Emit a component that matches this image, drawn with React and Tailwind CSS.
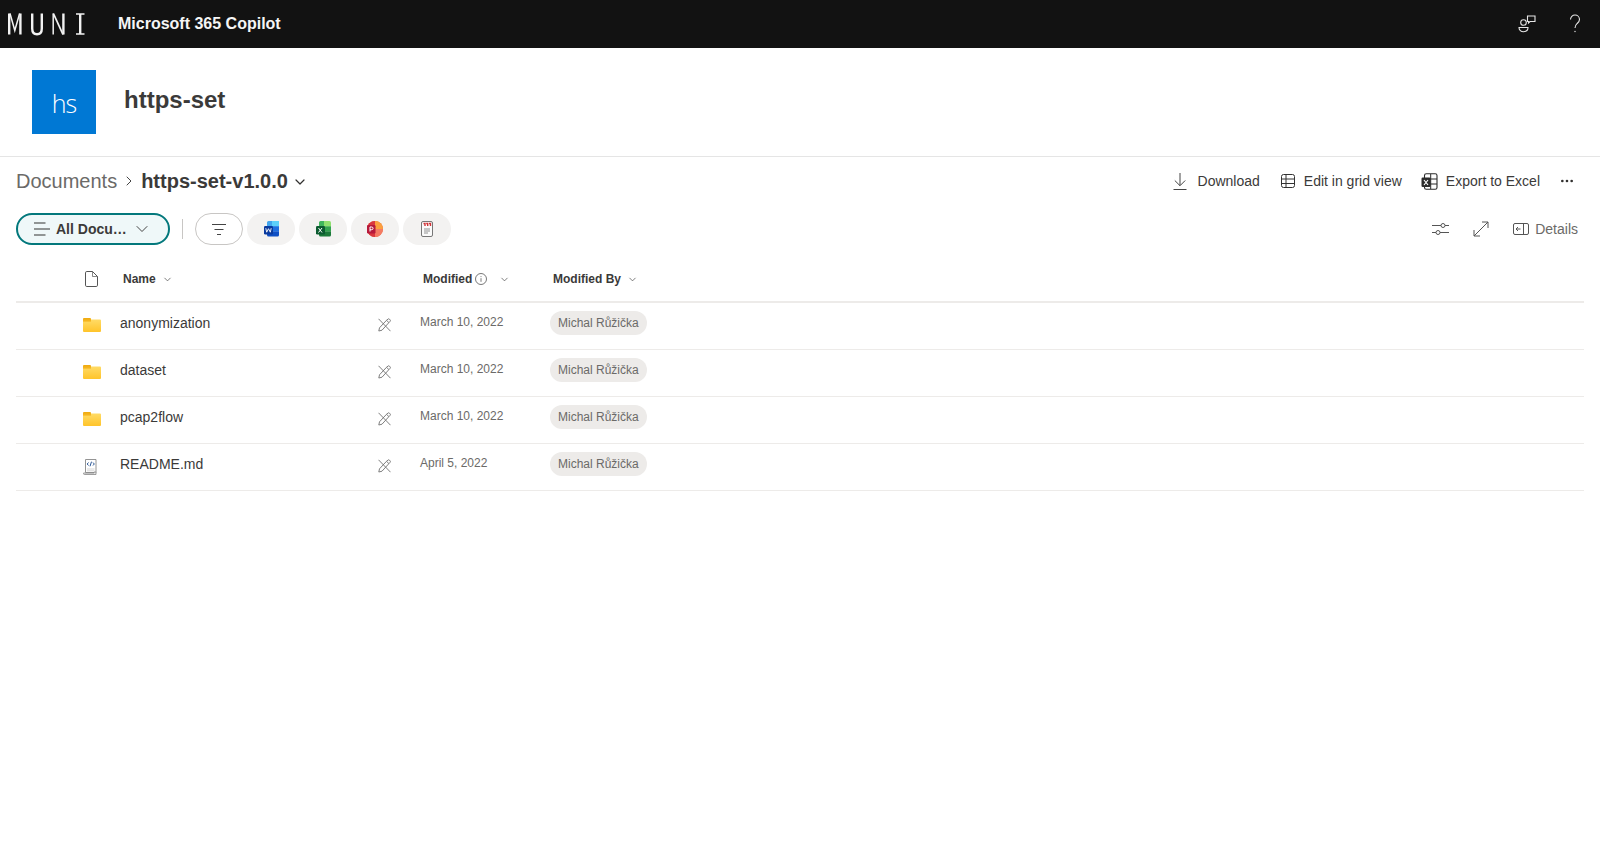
import React from 'react';
import { ChevronDown, ChevronRight, MoreHorizontal } from 'lucide-react';

const rows = [
    { name: 'anonymization', date: 'March 10, 2022', type: 'folder' },
    { name: 'dataset', date: 'March 10, 2022', type: 'folder' },
    { name: 'pcap2flow', date: 'March 10, 2022', type: 'folder' },
    { name: 'README.md', date: 'April 5, 2022', type: 'code' },
];

function MuniLogo() {
    return (
        <svg width="80" height="24" viewBox="0 0 80 24" fill="none" stroke="#f2f2f2">
            <path d="M1.200 22.500V1.500M12.400 22.500V1.500" strokeWidth="2.400" />
            <path d="M2 1.500l4.800 17 4.800-17" strokeWidth="1.500" />
            <path d="M24.200 1.500v15c0 3.800 1.800 5.700 4.800 5.700s4.800-1.900 4.800-5.700v-15" strokeWidth="2.400" />
            <path d="M45.200 22.500V1.500" strokeWidth="1.500" />
            <path d="M45.400 1.500l9.600 21" strokeWidth="1.800" />
            <path d="M55.400 22.500V1.500" strokeWidth="2.400" />
            <path d="M68 2h8.500M68 22h8.500" strokeWidth="1.500" />
            <path d="M72.200 2v20" strokeWidth="2.400" />
        </svg>
    );
}

function PeopleChatIcon() {
    return (
        <svg width="18" height="18" viewBox="0 0 18 18" fill="none" stroke="#e6e6e6" strokeWidth="1.100">
            <circle cx="5.500" cy="7.500" r="2.800" />
            <path d="M1 12.500h9c0 2.700-2 4.200-4.500 4.200S1 15.200 1 12.500z" />
            <path d="M9.500 1h7.500v5.500h-5l-1.500 1.500V6.500H9.500z" />
        </svg>
    );
}

function HelpMark() {
    return (
        <svg width="12" height="20" viewBox="0 0 12 20" fill="none" stroke="#e6e6e6" strokeWidth="1.100">
            <path d="M1.500 5.500C1.500 3 3.500 1 6 1s4.500 2 4.500 4.500c0 2-1.200 3-2.500 4.200C6.700 10.900 6 12 6 14" />
            <circle cx="6" cy="17.500" r="0.700" fill="#e6e6e6" stroke="none" />
        </svg>
    );
}

function DownloadIcon() {
    return (
        <svg width="14" height="17" viewBox="0 0 14 17" fill="none" stroke="#444" strokeWidth="1">
            <path d="M7 0v12.500M1.800 7.500L7 12.700l5.200-5.200M.5 16.500h13" />
        </svg>
    );
}

function GridIcon() {
    return (
        <svg width="16" height="16" viewBox="0 0 16 16" fill="none" stroke="#333" strokeWidth="1">
            <rect x="1.500" y="1.500" width="13" height="13" rx="2" />
            <path d="M1.500 6h13M1.500 10.500h13M6 1.500v13" />
        </svg>
    );
}

function ExcelMono() {
    return (
        <svg width="17" height="17" viewBox="0 0 17 17" fill="none">
            <rect x="3.500" y="0.700" width="12.500" height="15.600" rx="1.800" stroke="#2b2b2b" strokeWidth="1.100" />
            <path d="M9.700 1v15M4 6h12M4 11h12" stroke="#2b2b2b" strokeWidth="1" />
            <rect x="0.500" y="4.500" width="9" height="9.500" rx="1.200" fill="#2b2b2b" />
            <path d="M3 7l4 5M7 7l-4 5" stroke="#fff" strokeWidth="1.200" />
        </svg>
    );
}

function SlidersIcon() {
    return (
        <svg width="17" height="14" viewBox="0 0 17 14" fill="none" stroke="#555" strokeWidth="1">
            <path d="M0 3.500h9M13 3.500h4M0 10.500h4M8 10.500h9" />
            <circle cx="11" cy="3.500" r="2" />
            <circle cx="6" cy="10.500" r="2" />
        </svg>
    );
}

function ExpandIcon() {
    return (
        <svg width="16" height="16" viewBox="0 0 16 16" fill="none" stroke="#555" strokeWidth="1">
            <path d="M1 15L15 1M9 1h6v6M1 9v6h6" />
        </svg>
    );
}

function DetailsIcon() {
    return (
        <svg width="16" height="14" viewBox="0 0 16 14" fill="none" stroke="#555" strokeWidth="1">
            <rect x="0.500" y="1.500" width="15" height="11" rx="1.500" />
            <path d="M10.500 1.500v11M7.500 7H3M5 5L3 7l2 2" />
        </svg>
    );
}

function ListLines() {
    return (
        <svg width="16" height="14" viewBox="0 0 16 14" fill="none" stroke="#333" strokeWidth="1.100">
            <path d="M0 1h11.500M0 7h16M0 13h11.500" />
        </svg>
    );
}

function FilterLines() {
    return (
        <svg width="14" height="11" viewBox="0 0 14 11" fill="none" stroke="#444" strokeWidth="1">
            <path d="M0 .500h14M2.500 5.500h9M5 10.500h4" />
        </svg>
    );
}

function WordIcon() {
    return (
        <svg width="15" height="16" viewBox="0 0 15 16">
            <path d="M3 1.500A1.500 1.500 0 0 1 4.500 0H15v5.500H3z" fill="#41a5ee" />
            <path d="M8 0h7v5.500H8z" fill="#5dd0fa" />
            <rect x="3" y="5.300" width="12" height="5.400" fill="#1f6fe0" />
            <path d="M3 10.500h12v3.500a1.500 1.500 0 0 1-1.500 1.500h-9A1.500 1.500 0 0 1 3 14z" fill="#0f4fc4" />
            <rect x="0" y="5" width="9" height="8.500" rx="1.200" fill="#0a3a9e" />
            <path d="M1.800 7.200l.9 4 1.800-3.500 1.800 3.500.9-4" fill="none" stroke="#fff" strokeWidth="0.900" />
        </svg>
    );
}

function ExcelIcon() {
    return (
        <svg width="15" height="16" viewBox="0 0 15 16">
            <path d="M3 1.500A1.500 1.500 0 0 1 4.500 0H8v5.500H3z" fill="#3fb55c" />
            <path d="M8 0h5.500A1.500 1.500 0 0 1 15 1.500V5.500H8z" fill="#8fe06e" />
            <rect x="3" y="5.300" width="5" height="5.400" fill="#107c41" />
            <rect x="8" y="5.300" width="7" height="5.400" fill="#33a34f" />
            <path d="M3 10.500h12V14a1.500 1.500 0 0 1-1.500 1.500h-9A1.500 1.500 0 0 1 3 14z" fill="#1c7a3a" />
            <rect x="0" y="5" width="9" height="8.500" rx="1.200" fill="#0c5b30" />
            <path d="M2.500 7l3.500 4.500M6 7l-3.500 4.500" stroke="#fff" strokeWidth="1" />
        </svg>
    );
}

function PowerPointIcon() {
    return (
        <svg width="16" height="16" viewBox="0 0 16 16">
            <circle cx="8" cy="8" r="8" fill="#e8663c" />
            <path d="M8 0a8 8 0 0 1 8 8H8z" fill="#fb9f3f" />
            <path d="M8 8h8a8 8 0 0 1-8 8z" fill="#f47b63" />
            <path d="M8 0a8 8 0 0 0-8 8v0a8 8 0 0 0 8 8z" fill="#d9363e" />
            <rect x="0" y="4" width="8.500" height="8.500" rx="1.200" fill="#b7193a" />
            <path d="M3 10.500V6h1.700a1.300 1.300 0 0 1 0 2.700H3" fill="none" stroke="#fff" strokeWidth="1" />
        </svg>
    );
}

function PdfIcon() {
    return (
        <svg width="12" height="16" viewBox="0 0 12 16" fill="none">
            <rect x="0.500" y="0.500" width="11" height="15" rx="1.500" fill="#fafafa" stroke="#777" />
            <path d="M2.500 2.500h1.500v2.500M5.200 2.500h1.500v2.500M8 2.500h1.500v2.500" stroke="#d13438" strokeWidth="1.400" />
            <path d="M3 8h6M3 10h6M3 12h4" stroke="#777" strokeWidth="0.800" />
        </svg>
    );
}

function FileIcon() {
    return (
        <svg width="13" height="16" viewBox="0 0 13 16" fill="none" stroke="#555" strokeWidth="1">
            <path d="M1.800 .500h5.700l5 5v8.700a1.300 1.300 0 0 1-1.300 1.300H1.800a1.300 1.300 0 0 1-1.300-1.300V1.800A1.300 1.300 0 0 1 1.800.500z" />
            <path d="M7.500 .500v5h5" strokeWidth="0.700" />
        </svg>
    );
}

function FolderIcon({ id }) {
    return (
        <svg width="18" height="14" viewBox="0 0 18 14">
            <defs>
                <linearGradient id={id} x1="0" y1="0" x2="0" y2="1">
                    <stop offset="0" stopColor="#ffdb66" />
                    <stop offset="1" stopColor="#ffc42a" />
                </linearGradient>
            </defs>
            <path d="M0 1a1 1 0 0 1 1-1h6a1 1 0 0 1 1 1v3H0z" fill="#f0ab12" />
            <path d="M0 3h7.500L8 1.600H17a1 1 0 0 1 1 1V13a1 1 0 0 1-1 1H1a1 1 0 0 1-1-1z" fill={`url(#${id})`} />
            <path d="M0 1.500h8V3.600H0z" fill="#f5b41e" />
        </svg>
    );
}

function CodeFileIcon() {
    return (
        <svg width="14" height="16" viewBox="0 0 14 16" fill="none">
            <path d="M2.500.500h10.500v13H2.500z" fill="#fff" stroke="#888" strokeWidth="0.900" />
            <path d="M.500 14h10.500V13h2v2.500H1.500A1 1 0 0 1 .500 14.500z" fill="#e8e8e8" stroke="#888" strokeWidth="0.800" />
            <path d="M5.500 3.500L4.200 5l1.300 1.500M10 3.500L11.300 5 10 6.500" stroke="#2b5797" strokeWidth="1" />
            <path d="M8.500 2.700L7 7.300" stroke="#2b5797" strokeWidth="1" />
            <path d="M4 10h7.500M4 11.800h7.500" stroke="#bbb" strokeWidth="0.600" />
        </svg>
    );
}

function PinOffIcon() {
    return (
        <svg width="13" height="14" viewBox="0 0 13 14" fill="none" stroke="#707070" strokeWidth="0.900">
            <path d="M.500 .800l12 12.400" />
            <path d="M8.500 2.300L10 1.100a1 1 0 0 1 1.400 0l.7.800a1 1 0 0 1 0 1.400L10.900 4.600z" />
            <path d="M8.500 2.300L1.500 9.800.800 13l3.200-.8 6.900-7.600" />
        </svg>
    );
}

function InfoIcon() {
    return (
        <svg width="12" height="12" viewBox="0 0 12 12" fill="none" stroke="#555" strokeWidth="0.800">
            <circle cx="6" cy="6" r="5.500" />
            <path d="M6 5.200v3.600M6 3.200v.900" />
        </svg>
    );
}

function ColumnHeader({ children }) {
    return <span className="text-xs font-bold text-[#3b3a39]">{children}</span>;
}

function FileTypePill({ children }) {
    return (
        <button className="flex h-8 w-12 items-center justify-center rounded-full bg-[#f3f2f1]">
            {children}
        </button>
    );
}

function CommandButton({ icon, label, className }) {
    return (
        <button className={`flex items-center text-sm text-[#3b3a39] ${className}`}>
            {icon}
            <span>{label}</span>
        </button>
    );
}

function FileRow({ row, index }) {
    return (
        <div className="grid h-[47px] grid-cols-[104px_258px_42px_130px_1fr] border-b border-[#edebe9]">
            <div className="flex justify-start pl-[67px] pt-[15px]">
                {row.type === 'folder' ? <FolderIcon id={`folder-${index}`} /> : <CodeFileIcon />}
            </div>
            <div className="pt-[10px] text-sm leading-[20px] text-[#3b3a39]">{row.name}</div>
            <div className="pt-[15px]">
                <PinOffIcon />
            </div>
            <div className="pt-[10px] text-xs leading-[18px] text-[#6b6a68]">{row.date}</div>
            <div className="pt-[7px]">
                <span className="inline-flex h-6 items-center rounded-full bg-[#edebe9] px-2 text-xs text-[#6b6a68]">
                    Michal Růžička
                </span>
            </div>
        </div>
    );
}

export default function App() {
    return (
        <div className="min-h-[857px] bg-white font-['Liberation_Sans',Arial,sans-serif]">
            {/* Top bar */}
            <header className="flex h-12 items-center justify-between bg-[#121212] pl-2 pr-[19px]">
                <div className="flex items-center">
                    <MuniLogo />
                    <span className="ml-[30px] text-base font-bold text-[#f5f5f5]">Microsoft 365 Copilot</span>
                </div>
                <div className="flex items-center gap-[33px]">
                    <PeopleChatIcon />
                    <HelpMark />
                </div>
            </header>

            {/* Site header */}
            <div className="flex h-[109px] items-start border-b border-[#e5e5e5] pl-8 pt-[22px]">
                <div className="flex h-16 w-16 items-center justify-center bg-[#0078d4] pt-1 font-['Open_Sans',sans-serif] text-[25px] font-light tracking-[-1px] text-white">
                    hs
                </div>
                <h1 className="ml-7 mt-[14px] text-2xl font-bold text-[#3b3a39]">https-set</h1>
            </div>

            {/* Breadcrumb + commands */}
            <div className="flex h-[48px] items-center justify-between pl-4 pr-[25px]">
                <div className="flex items-center text-xl">
                    <span className="text-[#6b6a68]">Documents</span>
                    <ChevronRight className="mx-[4px] h-4 w-4 text-[#444]" strokeWidth={1.500} />
                    <span className="font-bold text-[#3b3a39]">https-set-v1.0.0</span>
                    <ChevronDown className="ml-[4px] mt-[2px] h-4 w-4 text-[#323130]" strokeWidth={1.800} />
                </div>
                <div className="flex items-center">
                    <CommandButton icon={<span className="mr-[11px] flex"><DownloadIcon /></span>} label="Download" />
                    <CommandButton className="ml-[20px]" icon={<span className="mr-[8px] flex"><GridIcon /></span>} label="Edit in grid view" />
                    <CommandButton className="ml-[19px]" icon={<span className="mr-[8px] flex"><ExcelMono /></span>} label="Export to Excel" />
                    <MoreHorizontal className="ml-[19px] h-4 w-4 text-[#323130]" strokeWidth={2} />
                </div>
            </div>

            {/* Filters */}
            <div className="mt-[8px] flex h-8 items-center justify-between pl-4 pr-[22px]">
                <div className="flex items-center">
                    <button className="flex h-8 w-[154px] items-center rounded-full border-2 border-[#03787c] bg-[#eff8f9] pl-[16px] text-sm font-bold text-[#3b3a39]">
                        <ListLines />
                        <span className="ml-[6px] w-[72px] text-left">All Docu…</span>
                        <ChevronDown className="ml-[4px] h-[20px] w-[20px] text-[#444]" strokeWidth={1.200} />
                    </button>
                    <div className="ml-3 h-5 w-px bg-[#c8c6c4]" />
                    <button className="ml-3 flex h-8 w-12 items-center justify-center rounded-full border border-[#c8c6c4] bg-white">
                        <FilterLines />
                    </button>
                    <div className="ml-1 flex gap-1">
                        <FileTypePill><WordIcon /></FileTypePill>
                        <FileTypePill><ExcelIcon /></FileTypePill>
                        <FileTypePill><PowerPointIcon /></FileTypePill>
                        <FileTypePill><PdfIcon /></FileTypePill>
                    </div>
                </div>
                <div className="flex items-center text-sm text-[#6b6a68]">
                    <SlidersIcon />
                    <span className="ml-[24px] flex"><ExpandIcon /></span>
                    <span className="ml-[24px] flex"><DetailsIcon /></span>
                    <span className="ml-[6px]">Details</span>
                </div>
            </div>

            {/* Table */}
            <div className="mx-4 mt-[12px]">
                <div className="grid h-[46px] grid-cols-[107px_300px_130px_1fr] items-center border-b-2 border-[#edebe9]">
                    <div className="pl-[69px]"><FileIcon /></div>
                    <div className="flex items-center">
                        <ColumnHeader>Name</ColumnHeader>
                        <ChevronDown className="ml-[6px] h-[11px] w-[11px] text-[#444]" strokeWidth={1.500} />
                    </div>
                    <div className="flex items-center">
                        <ColumnHeader>Modified</ColumnHeader>
                        <span className="ml-[3px] flex"><InfoIcon /></span>
                        <ChevronDown className="ml-[12px] h-[11px] w-[11px] text-[#444]" strokeWidth={1.500} />
                    </div>
                    <div className="flex items-center">
                        <ColumnHeader>Modified By</ColumnHeader>
                        <ChevronDown className="ml-[6px] h-[11px] w-[11px] text-[#444]" strokeWidth={1.500} />
                    </div>
                </div>
                {rows.map((row, index) => (
                    <FileRow key={row.name} row={row} index={index} />
                ))}
            </div>
        </div>
    );
}
